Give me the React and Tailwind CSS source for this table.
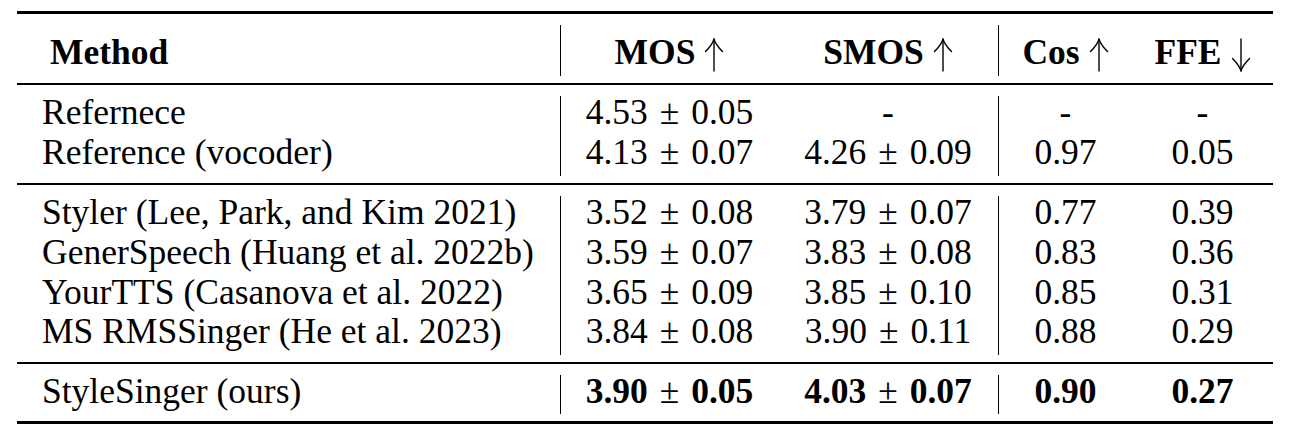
import React from "react";

function Arrow({ down }) {
  return (
    <svg
      width="20"
      height="34"
      viewBox="0 0 20 34"
      className={`inline-block align-[-8px] ml-[9px] ${down ? "rotate-180" : ""}`}
      fill="none"
      stroke="black"
      strokeWidth="1.4"
      strokeLinecap="round"
    >
      <path d="M10 1.5 V33" />
      <path d="M1.5 13.5 C5 10 8.5 6 10 1.2 C11.5 6 15 10 18.5 13.5" />
    </svg>
  );
}

function PM({ a, b, bold }) {
  return (
    <span className="whitespace-nowrap">
      <span className={bold ? "font-bold" : ""}>{a}</span>
      <span className="mx-[12px] font-normal">±</span>
      <span className={bold ? "font-bold" : ""}>{b}</span>
    </span>
  );
}

const group1 = [
  ["Refernece", ["4.53", "0.05"], null, "-", "-"],
  ["Reference (vocoder)", ["4.13", "0.07"], ["4.26", "0.09"], "0.97", "0.05"],
];
const group2 = [
  ["Styler (Lee, Park, and Kim 2021)", ["3.52", "0.08"], ["3.79", "0.07"], "0.77", "0.39"],
  ["GenerSpeech (Huang et al. 2022b)", ["3.59", "0.07"], ["3.83", "0.08"], "0.83", "0.36"],
  ["YourTTS (Casanova et al. 2022)", ["3.65", "0.09"], ["3.85", "0.10"], "0.85", "0.31"],
  ["MS RMSSinger (He et al. 2023)", ["3.84", "0.08"], ["3.90", "0.11"], "0.88", "0.29"],
];
const group3 = [
  ["StyleSinger (ours)", ["3.90", "0.05"], ["4.03", "0.07"], "0.90", "0.27"],
];

const cols = "grid grid-cols-[543px_218px_220px_134px_141px]";

function Row({ r, h, bold }) {
  const cell = `flex items-center pb-[6px] ${h}`;
  return (
    <>
      <div className={`${cell} pl-[25px] whitespace-nowrap`}>{r[0]}</div>
      <div className={`${cell} justify-center border-l border-black`}>
        {r[1] ? <PM a={r[1][0]} b={r[1][1]} bold={bold} /> : "-"}
      </div>
      <div className={`${cell} justify-center`}>
        {r[2] ? <PM a={r[2][0]} b={r[2][1]} bold={bold} /> : "-"}
      </div>
      <div className={`${cell} justify-center border-l border-black ${bold ? "font-bold" : ""}`}>{r[3]}</div>
      <div className={`${cell} justify-center ${bold ? "font-bold" : ""}`}>{r[4]}</div>
    </>
  );
}

export default function App() {
  const head = "flex items-start justify-center pt-[10px]";
  return (
    <div className="w-[1292px] h-[435px] bg-white text-black font-['Liberation_Serif']">
      <div className="ml-[17px] w-[1256px] pt-[11px] text-[35.5px] leading-none">
        <div className="h-[3px] bg-black" />
        <div className={`${cols} mt-[11px] h-[51px] font-bold`}>
          <div className="flex items-start pt-[10px] pl-[33px]">Method</div>
          <div className={`${head} border-l border-black`}>
            <span className="whitespace-nowrap">MOS<Arrow /></span>
          </div>
          <div className={head}>
            <span className="whitespace-nowrap">SMOS<Arrow /></span>
          </div>
          <div className={`${head} border-l border-black`}>
            <span className="whitespace-nowrap">Cos<Arrow /></span>
          </div>
          <div className={head}>
            <span className="whitespace-nowrap">FFE<Arrow down /></span>
          </div>
        </div>
        <div className="mt-[7px] h-[2px] bg-black" />
        <div className={`${cols} mt-[11px]`}>
          {group1.map((r, i) => (
            <Row key={i} r={r} h="h-[40px]" />
          ))}
        </div>
        <div className="mt-[7px] h-[2px] bg-black" />
        <div className={`${cols} mt-[11px]`}>
          {group2.map((r, i) => (
            <Row key={i} r={r} h="h-[39.75px]" />
          ))}
        </div>
        <div className="mt-[7px] h-[2px] bg-black" />
        <div className={`${cols} mt-[11px]`}>
          {group3.map((r, i) => (
            <Row key={i} r={r} h="h-[39px]" bold />
          ))}
        </div>
        <div className="mt-[7px] h-[3px] bg-black" />
      </div>
    </div>
  );
}
